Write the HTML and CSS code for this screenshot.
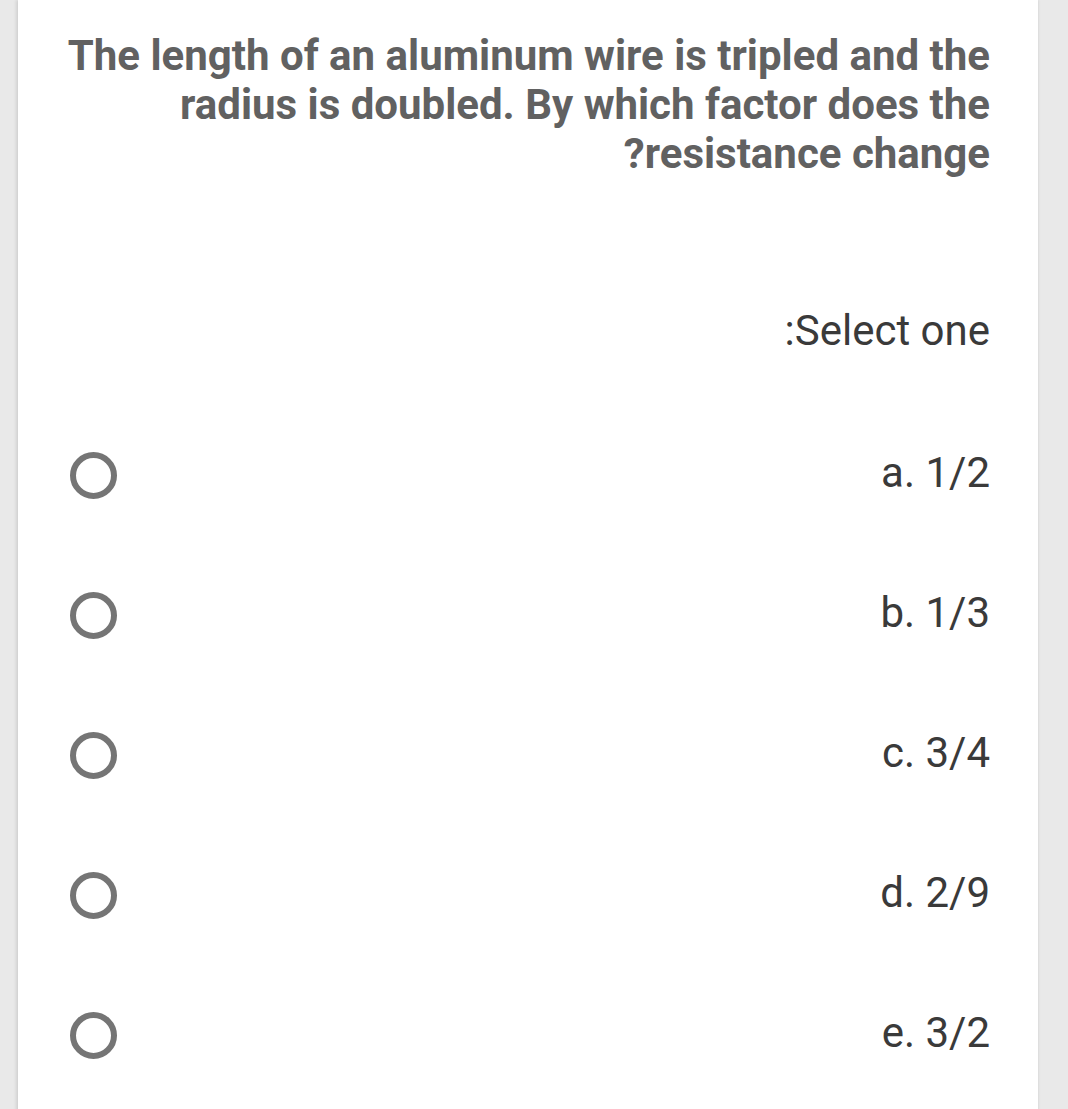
FILE: index.html
```html
<!DOCTYPE html>
<html>
<head>
<meta charset="utf-8">
<link rel="stylesheet" href="styles.css">
</head>
<body>
<div class="page">
  <div class="card">
    <div class="question">The length of an aluminum wire is tripled and the radius is doubled. By which factor does the resistance change?</div>
    <div class="prompt">Select one:</div>
    <div class="options">
      <div class="option"><span class="radio"></span><span class="label">a. 1/2</span></div>
      <div class="option"><span class="radio"></span><span class="label">b. 1/3</span></div>
      <div class="option"><span class="radio"></span><span class="label">c. 3/4</span></div>
      <div class="option"><span class="radio"></span><span class="label">d. 2/9</span></div>
      <div class="option"><span class="radio"></span><span class="label">e. 3/2</span></div>
    </div>
  </div>
</div>
</body>
</html>
```

FILE: styles.css
```css
html, body {
  margin: 0;
  padding: 0;
  background: #e9e9e9;
  font-family: Roboto, "Noto Sans", sans-serif;
}
.page {
  padding-left: 18px;
  height: 1109px;
  overflow: hidden;
}
.card {
  width: 1020px;
  height: 1200px;
  background: #ffffff;
  box-shadow: -2px 0 3px rgba(0,0,0,0.10), 1px 0 2px rgba(0,0,0,0.06);
  box-sizing: border-box;
  padding: 31px 48px 0 52px;
}
.question {
  direction: rtl;
  margin-left: -16px;
  text-align: right;
  font-weight: 700;
  font-size: 42px;
  line-height: 49px;
  color: #616161;
}
.prompt {
  direction: rtl;
  margin-top: 128px;
  text-align: right;
  font-size: 42px;
  line-height: 50px;
  color: #3a3a3a;
}
.options {
  margin-top: 47px;
  display: flex;
  flex-direction: column;
}
.option {
  height: 140px;
  display: flex;
  align-items: center;
  justify-content: space-between;
}
.radio {
  width: 47px;
  height: 47px;
  box-sizing: border-box;
  border: 6px solid #757575;
  border-radius: 50%;
  margin-top: 5px;
}
.label {
  font-size: 42px;
  line-height: 50px;
  color: #3a3a3a;
}
```
